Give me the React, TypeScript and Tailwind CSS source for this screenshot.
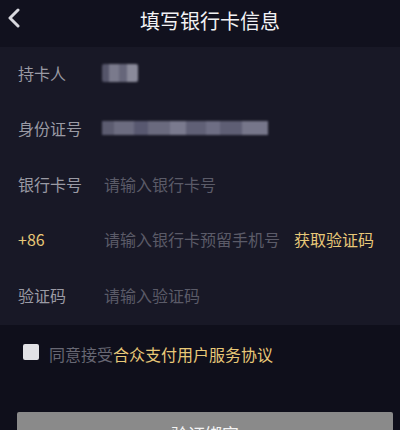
import React from "react";

const font = { fontFamily: '"Noto Sans CJK SC", "Noto Sans", sans-serif' };

function Row({ label, labelClass = "text-[#9a9aa4]", children }: { label: string; labelClass?: string; children?: React.ReactNode }) {
  return (
    <div className="flex h-[55.5px] items-center pb-[4px] pl-[18px]">
      <div className={`w-[86px] text-[16px] leading-none ${labelClass}`}>{label}</div>
      <div className="flex flex-1 items-center">{children}</div>
    </div>
  );
}

export default function App() {
  return (
    <div className="h-[430px] w-[400px] overflow-hidden bg-[#0f0f1b]" style={font}>
      <div className="relative flex h-[47px] items-center justify-center bg-[#11111e]">
        <svg className="absolute left-[7px] top-[8px]" width="14" height="20" viewBox="0 0 14 20">
          <path d="M11 2 L3 10 L11 18" fill="none" stroke="#d8d8de" strokeWidth="3" strokeLinecap="round" strokeLinejoin="round" />
        </svg>
        <div className="-mt-[6px] ml-[20px] text-[20px] leading-none text-[#f2f2f4]">填写银行卡信息</div>
      </div>
      <div className="flex h-[278px] flex-col bg-[#181826]">
        <Row label="持卡人">
          <div className="flex h-[18px] w-[36px] -ml-[2px] overflow-hidden rounded-[2px] blur-[1px]">
            <div className="w-[7px] bg-[#55556a]" />
            <div className="w-[10px] bg-[#7a7a8c]" />
            <div className="w-[8px] bg-[#66667a]" />
            <div className="w-[11px] bg-[#8a8a9a]" />
          </div>
        </Row>
        <Row label="身份证号">
          <div className="flex h-[14px] w-[166px] -ml-[2px] overflow-hidden blur-[1px]">
            <div className="w-[12px] bg-[#5c5c70]" />
            <div className="w-[20px] bg-[#6c6c80]" />
            <div className="w-[14px] bg-[#585870]" />
            <div className="w-[22px] bg-[#6a6a7e]" />
            <div className="w-[16px] bg-[#7a7a8e]" />
            <div className="w-[20px] bg-[#606076]" />
            <div className="w-[14px] bg-[#6e6e84]" />
            <div className="w-[22px] bg-[#5e5e74]" />
            <div className="w-[26px] bg-[#76768a]" />
          </div>
        </Row>
        <Row label="银行卡号">
          <span className="text-[16px] leading-none text-[#5b5b68]">请输入银行卡号</span>
        </Row>
        <Row label="+86" labelClass="text-[#e8c878]">
          <span className="text-[16px] leading-none text-[#5b5b68]">请输入银行卡预留手机号</span>
          <span className="ml-[14px] text-[16px] leading-none text-[#e8c878]">获取验证码</span>
        </Row>
        <Row label="验证码">
          <span className="text-[16px] leading-none text-[#5b5b68]">请输入验证码</span>
        </Row>
      </div>
      <div className="flex items-center pl-[23px] pt-[17px]">
        <div className="h-[16px] w-[16px] rounded-[2px] bg-[#e2e2e6]" />
        <div className="ml-[10px] mt-[4px] text-[16px] leading-none">
          <span className="text-[#676773]">同意接受</span>
          <span className="text-[#e8c878]">合众支付用户服务协议</span>
        </div>
      </div>
      <div className="ml-[17px] mr-[7px] mt-[50px] flex h-[46px] items-start justify-center rounded-t-[2px] bg-[#8a8a8a] pt-[13px]">
        <span className="text-[17px] leading-none text-[#f4f4f4]">验证绑定</span>
      </div>
    </div>
  );
}
